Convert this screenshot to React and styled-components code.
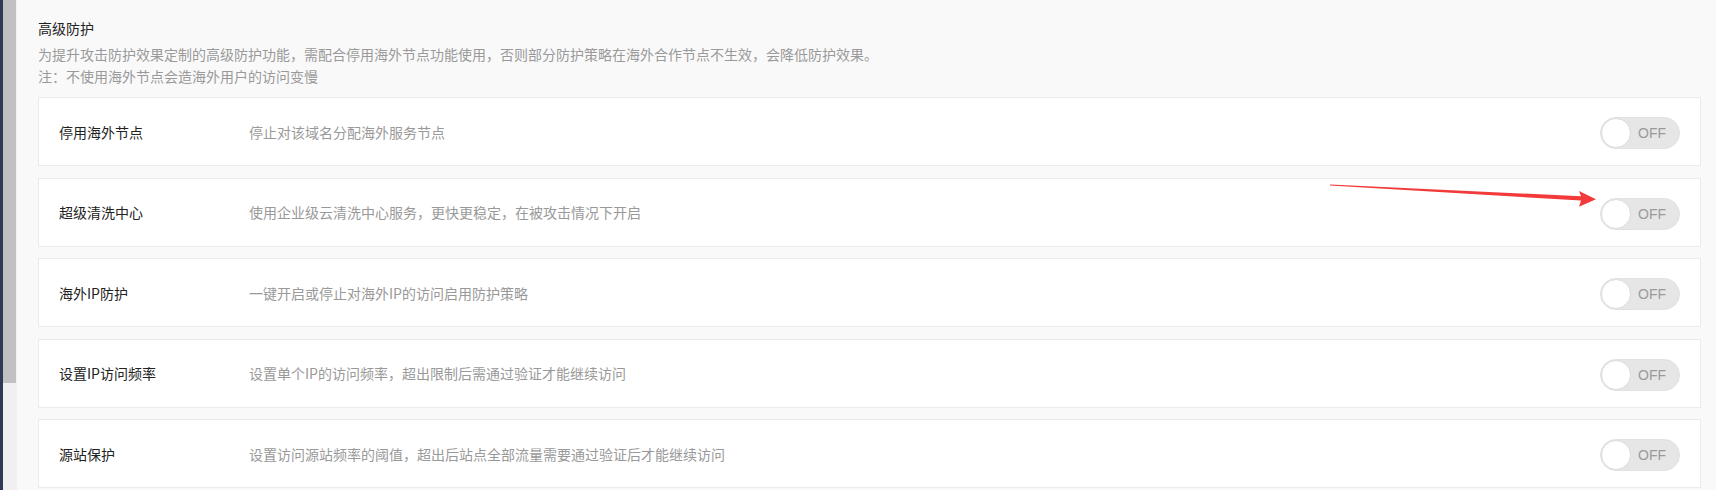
import React from "react";
import styled, { createGlobalStyle } from "styled-components";

const GlobalStyle = createGlobalStyle`
  html, body {
    margin: 0;
    padding: 0;
    background: #f9f9f9;
    font-family: "Noto Sans CJK SC", "Liberation Sans", sans-serif;
  }
`;

const Page = styled.div`
  position: relative;
  display: flex;
  height: 490px;
  overflow: hidden;
  background: #f9f9f9;
`;

const EdgeStrip = styled.div`
  width: 3px;
  flex-shrink: 0;
  background: #2d3b55;
`;

const ScrollTrack = styled.div`
  width: 14px;
  flex-shrink: 0;
  background: #f0f0f0;
`;

const ScrollThumb = styled.div`
  width: 13px;
  height: 383px;
  background: #c1c1c1;
`;

const Main = styled.div`
  flex: 1;
  padding: 18px 15px 0 21px;
  min-width: 0;
`;

const Title = styled.h3`
  margin: 0;
  font-size: 14px;
  line-height: 20px;
  font-weight: normal;
  color: #222;
`;

const Intro = styled.div`
  margin-top: 5px;
  font-size: 14px;
  line-height: 22px;
  color: #999;
`;

const List = styled.div`
  display: flex;
  flex-direction: column;
  gap: 11.5px;
  margin-top: 10px;
`;

const Card = styled.div`
  box-sizing: border-box;
  height: 69px;
  display: flex;
  align-items: center;
  padding: 0 20px;
  background: #fff;
  border: 1px solid #ebebeb;
`;

const Label = styled.div`
  width: 190px;
  flex-shrink: 0;
  font-size: 14px;
  color: #222;
`;

const Desc = styled.div`
  flex: 1;
  font-size: 14px;
  color: #999;
`;

const Toggle = styled.div`
  box-sizing: border-box;
  width: 80px;
  height: 32px;
  margin-top: 3px;
  border-radius: 16px;
  border: 1px solid #e2e2e2;
  background: #e6e6e6;
  display: flex;
  align-items: center;
  flex-shrink: 0;
`;

const Knob = styled.span`
  box-sizing: border-box;
  width: 30px;
  height: 30px;
  border-radius: 50%;
  background: #fff;
  border: 1px solid #dcdcdc;
`;

const ToggleText = styled.span`
  flex: 1;
  text-align: center;
  padding-right: 6px;
  font-family: "Liberation Sans", Arial, sans-serif;
  font-size: 14px;
  color: #9a9a9a;
`;

const Arrow = styled.svg`
  position: absolute;
  left: 1320px;
  top: 175px;
  width: 290px;
  height: 40px;
  pointer-events: none;
`;

const rows = [
  ["停用海外节点", "停止对该域名分配海外服务节点"],
  ["超级清洗中心", "使用企业级云清洗中心服务，更快更稳定，在被攻击情况下开启"],
  ["海外IP防护", "一键开启或停止对海外IP的访问启用防护策略"],
  ["设置IP访问频率", "设置单个IP的访问频率，超出限制后需通过验证才能继续访问"],
  ["源站保护", "设置访问源站频率的阈值，超出后站点全部流量需要通过验证后才能继续访问"],
];

const App = () => {
  return (
    <>
      <GlobalStyle />
      <Page>
        <EdgeStrip />
        <ScrollTrack>
          <ScrollThumb />
        </ScrollTrack>
        <Main>
          <Title>高级防护</Title>
          <Intro>
            为提升攻击防护效果定制的高级防护功能，需配合停用海外节点功能使用，否则部分防护策略在海外合作节点不生效，会降低防护效果。
            <br />
            注：不使用海外节点会造海外用户的访问变慢
          </Intro>
          <List>
            {rows.map(([label, desc]) => (
              <Card key={label}>
                <Label>{label}</Label>
                <Desc>{desc}</Desc>
                <Toggle>
                  <Knob />
                  <ToggleText>OFF</ToggleText>
                </Toggle>
              </Card>
            ))}
          </List>
        </Main>
        <Arrow viewBox="0 0 290 40">
          <polygon
            points="10,9.5 261,21.2 259,16 276,24.3 259,31.7 261,25.6 10,10.5"
            fill="#f23a3a"
          />
        </Arrow>
      </Page>
    </>
  );
};

export default App;
